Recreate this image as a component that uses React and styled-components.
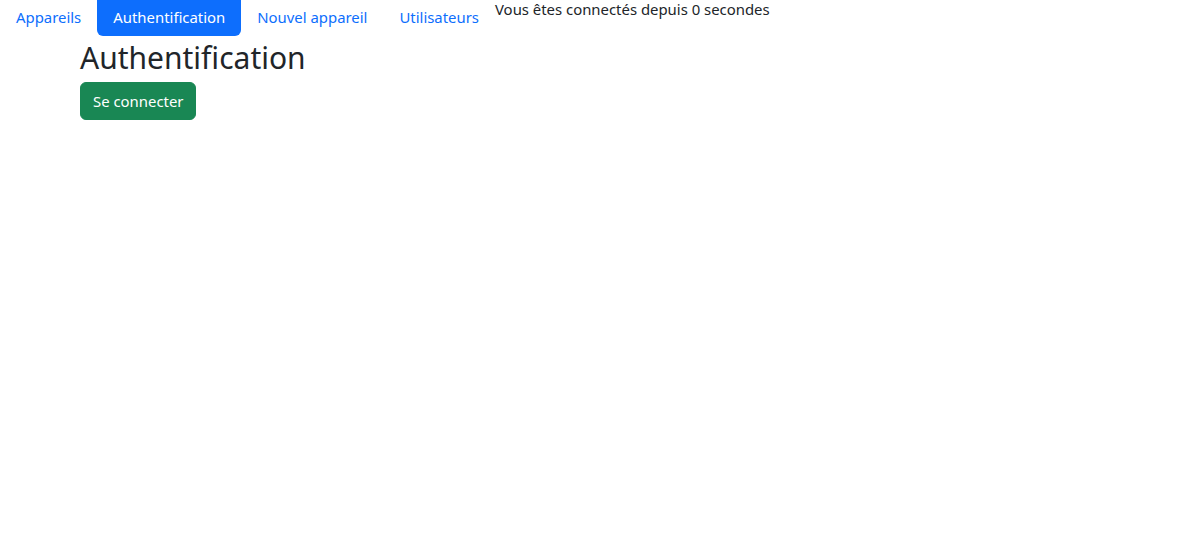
import React from "react";
import styled, { createGlobalStyle } from "styled-components";

const Global = createGlobalStyle`
  html, body { margin: 0; padding: 0; background: #fff; }
  body {
    font-family: "Noto Sans", "Liberation Sans", sans-serif;
    font-size: 16px;
    line-height: 24px;
    color: #212529;
  }
  * { box-sizing: border-box; }
`;

const TopBar = styled.div`
  display: flex;
  align-items: flex-start;
`;

const Nav = styled.ul`
  display: flex;
  list-style: none;
  margin: 0;
  padding: 0;
`;

const NavLink = styled.a`
  display: block;
  padding: 5px 16px 7px;
  line-height: 24px;
  font-size: 14.9px;
  border-radius: 0 0 6px 6px;
  text-decoration: none;
  cursor: pointer;
  color: ${(p) => (p.$active ? "#fff" : "#0d6efd")};
  background: ${(p) => (p.$active ? "#0d6efd" : "transparent")};
`;

const Status = styled.span`
  font-size: 14.9px;
  line-height: 18px;
`;

const Container = styled.div`
  padding-left: 80px;
`;

const Title = styled.h2`
  margin: 3px 0 5px;
  font-weight: 400;
  font-size: 30px;
  line-height: 38px;
  color: #212529;
`;

const Button = styled.button`
  font-family: inherit;
  font-size: 14.9px;
  line-height: 24px;
  padding: 6px 12px;
  color: #fff;
  background: #198754;
  border: 1px solid #198754;
  border-radius: 6px;
  cursor: pointer;
`;

const links = ["Appareils", "Authentification", "Nouvel appareil", "Utilisateurs"];

export default function App() {
  return (
    <>
      <Global />
      <TopBar>
        <Nav>
          {links.map((l) => (
            <li key={l}>
              <NavLink $active={l === "Authentification"}>{l}</NavLink>
            </li>
          ))}
        </Nav>
        <Status>Vous êtes connectés depuis 0 secondes</Status>
      </TopBar>
      <Container>
        <Title>Authentification</Title>
        <Button>Se connecter</Button>
      </Container>
    </>
  );
}
